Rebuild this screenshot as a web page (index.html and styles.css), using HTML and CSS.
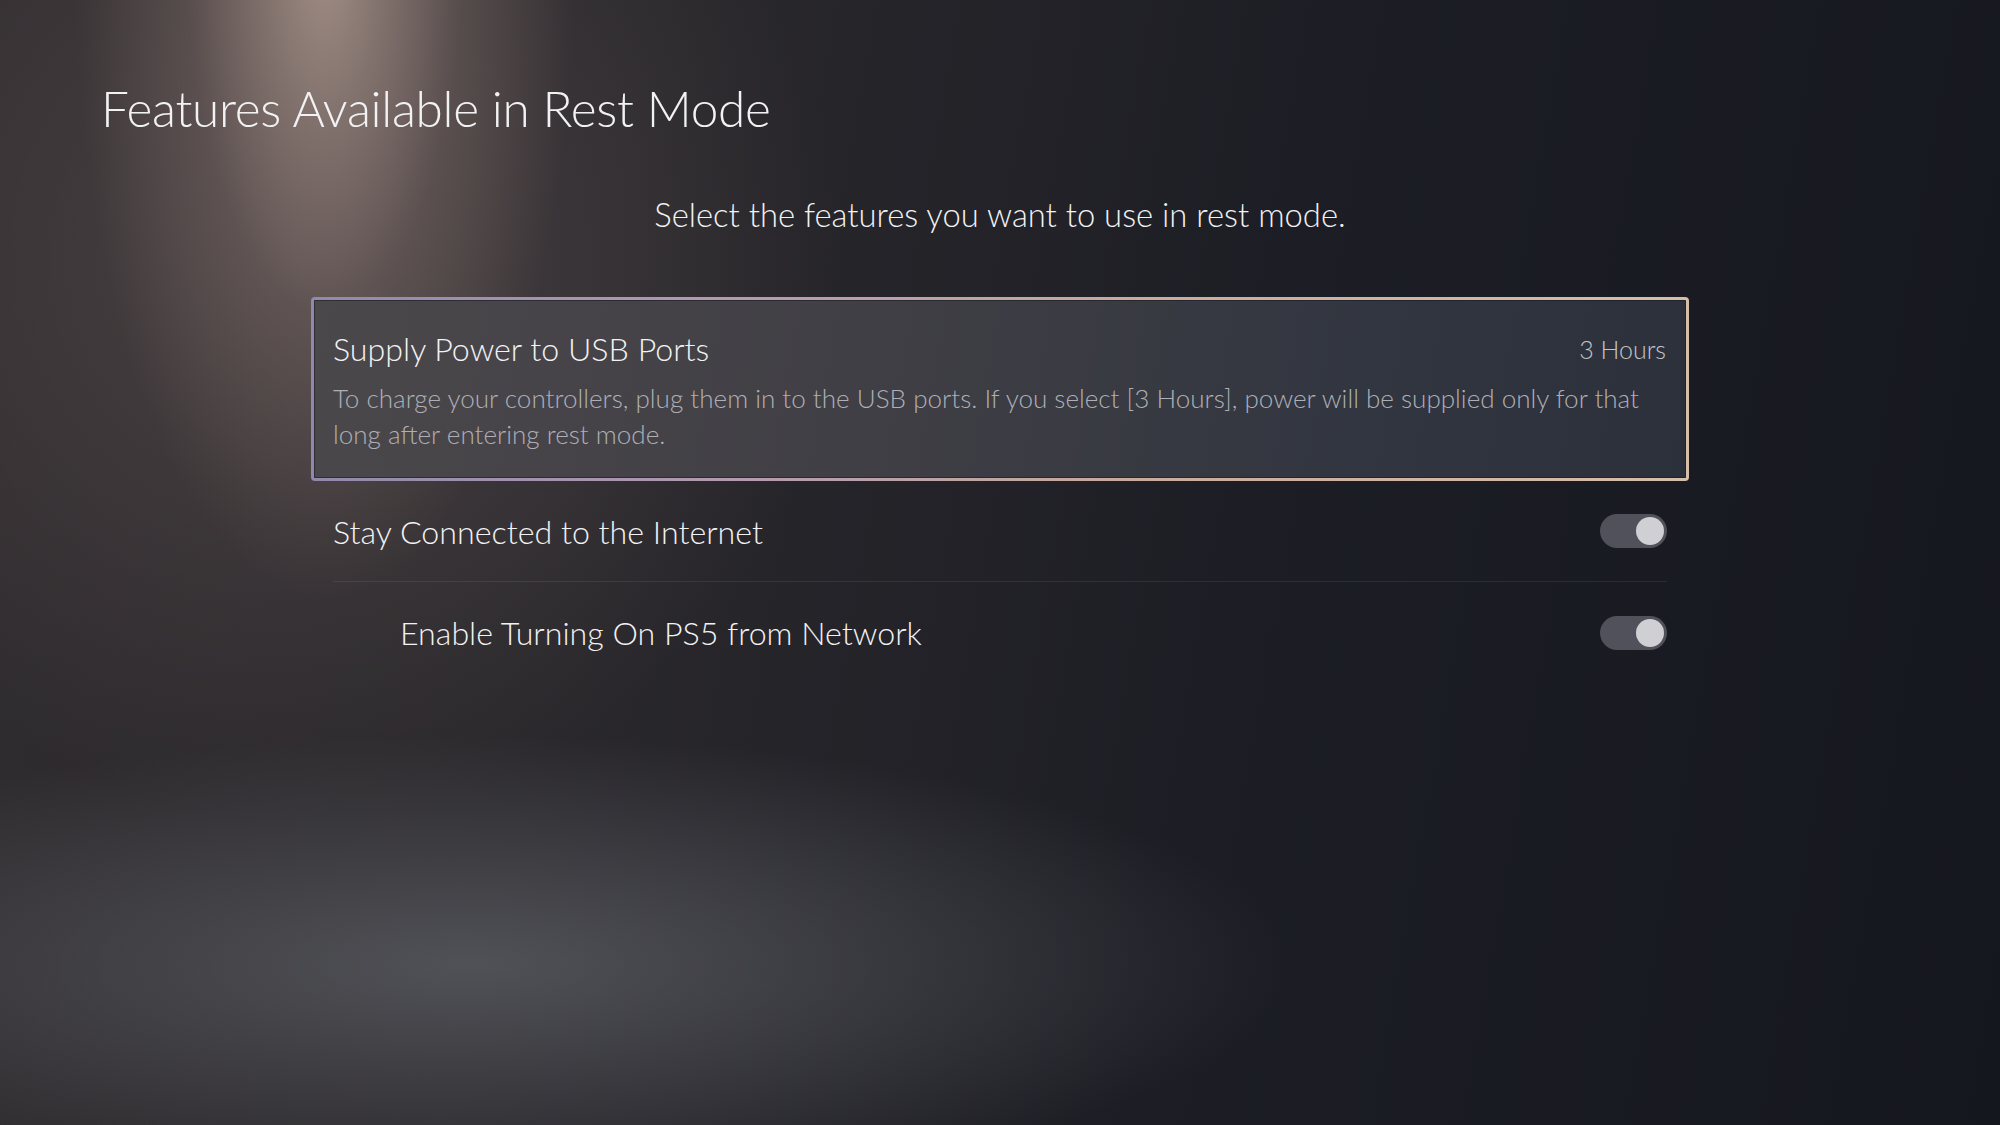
FILE: index.html
```html
<!DOCTYPE html>
<html>
  <head>
    <title>Features Available in Rest Mode</title>
    <meta charset="UTF-8">
    <meta name="viewport" content="width=device-width, initial-scale=1.0">
    <link rel="stylesheet" href="styles.css">
  </head>
  <body>
    <div class="screen">
      <h1 class="page-title">Features Available in Rest Mode</h1>
      <p class="intro">Select the features you want to use in rest mode.</p>

      <div class="list">
        <div class="card">
          <div class="card-head">
            <span class="card-title">Supply Power to USB Ports</span>
            <span class="card-value">3 Hours</span>
          </div>
          <p class="card-desc">To charge your controllers, plug them in to the USB ports. If you select [3 Hours], power will be supplied only for that long after entering rest mode.</p>
        </div>

        <div class="row row-line">
          <span class="row-label">Stay Connected to the Internet</span>
          <span class="toggle"><span class="knob"></span></span>
        </div>

        <div class="row">
          <span class="row-label sub">Enable Turning On PS5 from Network</span>
          <span class="toggle"><span class="knob"></span></span>
        </div>
      </div>
    </div>
  </body>
</html>
```

FILE: styles.css
```css
* {
  box-sizing: border-box;
  margin: 0;
  padding: 0;
}

html, body {
  height: 100%;
}

body {
  font-family: Lato, "Open Sans", sans-serif;
  font-weight: 300;
  color: #f2f2f4;
  background-color: #191a21;
  background-image:
    radial-gradient(ellipse 250px 640px at 325px -40px, rgba(178, 156, 146, 0.85), rgba(140, 120, 115, 0.35) 55%, rgba(0, 0, 0, 0) 100%),
    radial-gradient(ellipse 540px 560px at 300px 260px, rgba(120, 104, 102, 0.38), rgba(0, 0, 0, 0) 100%),
    radial-gradient(ellipse 820px 230px at 470px 965px, rgba(95, 97, 103, 0.72), rgba(0, 0, 0, 0) 100%),
    linear-gradient(100deg, #302c2f 0%, #2a282c 30%, #1d1e25 60%, #15171f 100%);
  overflow: hidden;
}

.screen {
  height: 100%;
  padding: 68px 0 0;
}

.page-title {
  font-size: 49.5px;
  font-weight: 300;
  margin-left: 101px;
  line-height: 80px;
  letter-spacing: -0.3px;
}

.intro {
  text-align: center;
  font-size: 32.8px;
  line-height: 44px;
  margin-top: 45px;
}

.list {
  width: 1378px;
  margin: 60px auto 0;
}

.card {
  border: 3px solid transparent;
  border-radius: 4px;
  padding: 27px 20px 26px 19px;
  background:
    linear-gradient(100deg, #4b484b 0%, #403f45 40%, #323640 75%, #2c303b 100%) padding-box,
    linear-gradient(90deg, #9189ad 0%, #b39ab0 30%, #c8ab9c 60%, #d6bfa9 100%) border-box;
  box-shadow: inset 0 0 0 1px rgba(20, 20, 28, 0.5);
}

.card-head {
  display: flex;
  justify-content: space-between;
  align-items: center;
  line-height: 44px;
}

.card-title {
  font-size: 32.2px;
}

.card-value {
  font-size: 25px;
  color: #c3c3ca;
}

.card-desc {
  margin-top: 9px;
  font-size: 26.05px;
  line-height: 36px;
  color: #aeafb6;
  padding-right: 10px;
}

.row {
  display: flex;
  justify-content: space-between;
  align-items: center;
  height: 101px;
  margin: 0 22px;
}

.row-line {
  border-bottom: 1px solid rgba(255, 255, 255, 0.08);
}

.row-label {
  font-size: 32.2px;
}

.row-label.sub {
  margin-left: 67px;
}

.toggle {
  display: flex;
  justify-content: flex-end;
  align-items: center;
  width: 67px;
  height: 34px;
  padding: 3px;
  border-radius: 17px;
  background-color: #50515b;
}

.knob {
  width: 28px;
  height: 28px;
  border-radius: 50%;
  background-color: #d0d0d4;
}
```
